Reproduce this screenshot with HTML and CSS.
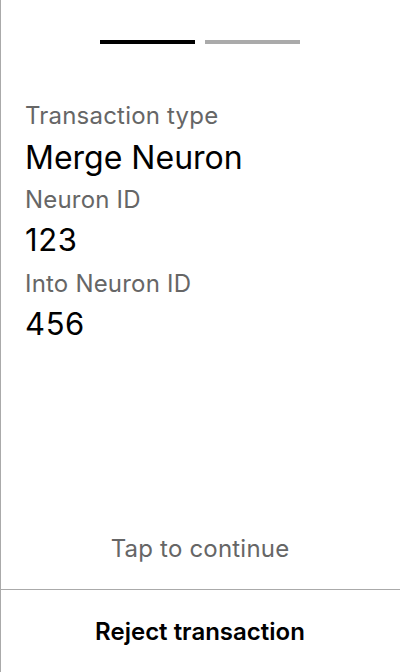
FILE: index.html
```html
<!DOCTYPE html>
<html>
<head>
<meta charset="utf-8">
<link rel="stylesheet" href="styles.css">
</head>
<body>
<div class="screen">
  <div class="progress">
    <span class="bar active"></span>
    <span class="bar"></span>
  </div>
  <div class="details">
    <div class="label">Transaction type</div>
    <div class="value title">Merge Neuron</div>
    <div class="label">Neuron ID</div>
    <div class="value">123</div>
    <div class="label">Into Neuron ID</div>
    <div class="value">456</div>
  </div>
  <div class="tap">Tap to continue</div>
  <div class="reject">Reject transaction</div>
</div>
</body>
</html>
```
FILE: styles.css
```css
html, body {
  margin: 0;
  padding: 0;
  background: #fff;
}
body {
  font-family: Inter, "Noto Sans", sans-serif;
}
.screen {
  height: 672px;
  box-sizing: border-box;
  box-shadow: inset 1px 0 0 #aaaaaa;
  display: flex;
  flex-direction: column;
}
.progress {
  display: flex;
  justify-content: center;
  gap: 10px;
  padding-top: 40px;
}
.bar {
  width: 95px;
  height: 4px;
  background: #aaaaaa;
}
.bar.active {
  background: #000;
}
.details {
  padding: 56px 25px 0;
  flex: 1;
}
.label {
  font-size: 24px;
  line-height: 32px;
  letter-spacing: 0.2px;
  color: #666;
}
.value {
  font-size: 31px;
  line-height: 48px;
  letter-spacing: 0.6px;
  color: #000;
  margin-bottom: 4px;
}
.value.title {
  font-size: 32px;
  letter-spacing: 0;
  margin-top: 2px;
  margin-bottom: 2px;
}
.tap {
  text-align: center;
  font-size: 24px;
  line-height: 32px;
  letter-spacing: 0.2px;
  color: #666;
  padding-bottom: 24px;
}
.reject {
  border-top: 1px solid #aaaaaa;
  height: 83px;
  box-sizing: border-box;
  padding-top: 26px;
  text-align: center;
  font-size: 24px;
  line-height: 32px;
  font-weight: 600;
  color: #000;
}
```
